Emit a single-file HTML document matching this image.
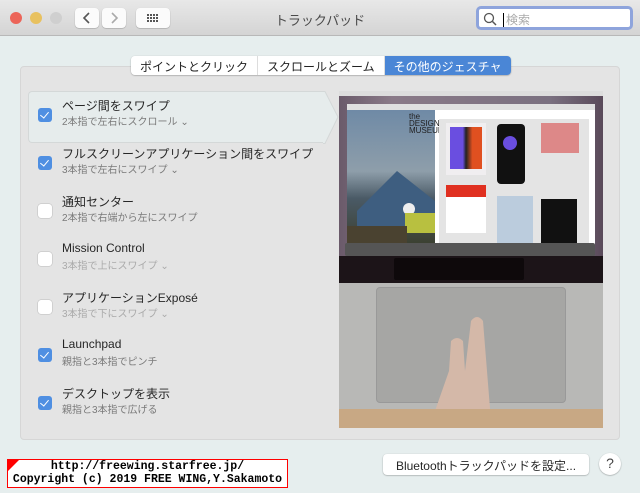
<!DOCTYPE html>
<html><head><meta charset="utf-8"><style>
*{margin:0;padding:0;box-sizing:border-box}
body{width:640px;height:493px;background:#e6eeee;font-family:"Liberation Sans","Noto Sans CJK JP",sans-serif;position:relative;overflow:hidden;color:#262626}
.tb{position:absolute;left:0;top:0;width:640px;height:36px;background:linear-gradient(#e8e8e8,#d4d4d4);border-bottom:1px solid #b8b8b8}
.dot{position:absolute;top:12px;width:12px;height:12px;border-radius:50%}
.btn{position:absolute;top:8px;height:20px;background:#fbfbfb;border-radius:4px;box-shadow:0 0.5px 1px rgba(0,0,0,.3)}
.title{position:absolute;left:0;width:640px;top:10px;text-align:center;font-size:13px;color:#4a4a4a}
.search{position:absolute;left:476px;top:6px;width:157px;height:24px;border:3px solid #8ea4dc;border-radius:5px;background:#fff;font-size:12px;color:#aaa;padding:2px 0 0 24px}
.panel{position:absolute;left:20px;top:66px;width:600px;height:374px;background:#e4e4e4;border:1px solid #d6d6d6;border-radius:4px}
.tabs{position:absolute;left:131px;top:56px;height:19px;display:flex;font-size:12px;border-radius:4px;box-shadow:0 0.5px 1.5px rgba(0,0,0,.35);overflow:hidden}
.tabs div{background:#fff;padding:2px 9px 0;border-right:1px solid #ddd;height:19px;color:#222}
.tabs .on{background:#4a86d6;color:#fff;border:none}
.sel{position:absolute;left:28px;top:91px;width:296px;height:52px;background:#e6ecec;border:1px solid #d4d8d8;border-right:none;border-radius:4px 0 0 4px}
.row{position:absolute;left:38px}
.cb{position:absolute;left:0;top:0;width:14px;height:14px;border-radius:3px;background:#fff;box-shadow:0 0 0 .5px #bbb}
.cb.on{background:#4f8fe2;box-shadow:none}
.cb.on:after{content:"";position:absolute;left:4px;top:2px;width:4px;height:7px;border:solid #fff;border-width:0 1.6px 1.6px 0;transform:rotate(40deg)}
.t{position:absolute;left:24px;top:-11px;font-size:12px;white-space:nowrap;color:#262626}
.s{position:absolute;left:24px;top:5px;font-size:10px;white-space:nowrap;color:#7a7a7a}
.s.g{color:#aaa}
.img{position:absolute;left:339px;top:91px;width:264px;height:337px;background:#b9b9b7;overflow:hidden}
.bt{position:absolute;left:383px;top:454px;width:206px;height:21px;background:#fff;border-radius:4px;box-shadow:0 .5px 1.5px rgba(0,0,0,.35);font-size:12px;text-align:center;padding-top:3px}
.q{position:absolute;left:599px;top:453px;width:22px;height:22px;border-radius:50%;background:#fff;box-shadow:0 .5px 1.5px rgba(0,0,0,.35);font-size:14px;text-align:center;padding-top:2px;color:#444}
.cp{position:absolute;left:7px;top:459px;width:281px;height:29px;border:1px solid red;background:#fff;font-family:"Liberation Mono",monospace;font-size:11.5px;line-height:13px;text-align:center;color:#000;font-weight:bold}
</style></head><body>
<div class="tb">
<div class="dot" style="left:10px;background:#ec6559"></div>
<div class="dot" style="left:30px;background:#e8c15f"></div>
<div class="dot" style="left:50px;background:#cfcfcf"></div>
<div class="btn" style="left:75px;width:24px"><svg width="24" height="20"><path d="M14 5 L9 10 L14 15" stroke="#555" stroke-width="1.6" fill="none"/></svg></div>
<div class="btn" style="left:102px;width:24px"><svg width="24" height="20"><path d="M10 5 L15 10 L10 15" stroke="#aaa" stroke-width="1.6" fill="none"/></svg></div>
<div class="btn" style="left:136px;width:34px"><svg width="34" height="20"><g fill="#555"><rect x="11" y="6" width="2" height="2"/><rect x="14" y="6" width="2" height="2"/><rect x="17" y="6" width="2" height="2"/><rect x="20" y="6" width="2" height="2"/><rect x="11" y="9" width="2" height="2"/><rect x="14" y="9" width="2" height="2"/><rect x="17" y="9" width="2" height="2"/><rect x="20" y="9" width="2" height="2"/><rect x="11" y="12" width="2" height="2"/><rect x="14" y="12" width="2" height="2"/><rect x="17" y="12" width="2" height="2"/><rect x="20" y="12" width="2" height="2"/></g></svg></div>
<div class="title">トラックパッド</div>
<div class="search"><svg style="position:absolute;left:4px;top:3px" width="14" height="14"><circle cx="6" cy="6" r="4.5" stroke="#555" stroke-width="1.3" fill="none"/><path d="M9.5 9.5L13 13" stroke="#555" stroke-width="1.5"/></svg><span style="border-left:1px solid #000;padding-left:2px">検索</span></div>
</div>
<div class="panel"></div>
<div class="tabs"><div>ポイントとクリック</div><div>スクロールとズーム</div><div class="on">その他のジェスチャ</div></div>
<div class="sel"></div>
<svg style="position:absolute;left:323px;top:91px" width="16" height="53"><path d="M0 0.5 L2 0.5 L15 26 L2 52.5 L0 52.5 Z" fill="#e6ecec" stroke="#d4d8d8"/><rect x="0" y="1" width="1.5" height="51" fill="#e6ecec"/></svg>
<div class="row" style="top:108px"><div class="cb on"></div><div class="t">ページ間をスワイプ</div><div class="s">2本指で左右にスクロール ⌄</div></div>
<div class="row" style="top:156px"><div class="cb on"></div><div class="t">フルスクリーンアプリケーション間をスワイプ</div><div class="s">3本指で左右にスワイプ ⌄</div></div>
<div class="row" style="top:204px"><div class="cb"></div><div class="t">通知センター</div><div class="s">2本指で右端から左にスワイプ</div></div>
<div class="row" style="top:252px"><div class="cb"></div><div class="t">Mission Control</div><div class="s g">3本指で上にスワイプ ⌄</div></div>
<div class="row" style="top:300px"><div class="cb"></div><div class="t">アプリケーションExposé</div><div class="s g">3本指で下にスワイプ ⌄</div></div>
<div class="row" style="top:348px"><div class="cb on"></div><div class="t">Launchpad</div><div class="s">親指と3本指でピンチ</div></div>
<div class="row" style="top:396px"><div class="cb on"></div><div class="t">デスクトップを表示</div><div class="s">親指と3本指で広げる</div></div>
<div class="img">
<div style="position:absolute;left:0;top:0;width:264px;height:165px;background:linear-gradient(90deg,#6a5a6a,#8a7a88 20%,#7a7080 80%,#5a4a5a)"></div>
<div style="position:absolute;left:0;top:0;width:264px;height:5px;background:#ddd"></div>
<div style="position:absolute;left:8px;top:13px;width:248px;height:142px;background:#fff"></div>
<div style="position:absolute;left:8px;top:13px;width:248px;height:6px;background:#e0e0e0"></div>
<div style="position:absolute;left:8px;top:19px;width:88px;height:136px;background:linear-gradient(#6f8aa6,#8e9eaa 45%,#4a5a66 65%,#3b3f2e)"></div>
<svg style="position:absolute;left:8px;top:60px" width="88" height="95"><path d="M10 60 L50 20 L88 50 L88 80 L10 80Z" fill="#3e5e80"/><circle cx="62" cy="58" r="6" fill="#eee"/><rect x="58" y="62" width="30" height="20" fill="#b8c040"/><rect x="0" y="75" width="60" height="20" fill="#4a4230"/></svg>
<div style="position:absolute;left:70px;top:22px;font-size:8px;line-height:7px;color:#222">the<br>DESIGN<br>MUSEUM</div>
<div style="position:absolute;left:100px;top:28px;width:150px;height:127px;background:#e4e4e4"></div>
<div style="position:absolute;left:107px;top:32px;width:40px;height:52px;background:#f0eef0"><div style="margin:4px;width:32px;height:42px;background:linear-gradient(90deg,#6a4ee0 40%,#222 50%,#e05020 70%)"></div></div>
<div style="position:absolute;left:158px;top:33px;width:28px;height:60px;background:#111;border-radius:4px"><div style="margin:12px 6px;width:14px;height:14px;border-radius:50%;background:#6a4ee0"></div></div>
<div style="position:absolute;left:202px;top:32px;width:38px;height:30px;background:#d88"></div>
<div style="position:absolute;left:107px;top:94px;width:40px;height:48px;background:#fff;border-top:12px solid #e03020"></div>
<div style="position:absolute;left:158px;top:105px;width:36px;height:50px;background:#bcd"></div>
<div style="position:absolute;left:202px;top:108px;width:36px;height:46px;background:#111"></div>
<div style="position:absolute;left:6px;top:152px;width:250px;height:13px;background:#555;border-radius:2px"></div>
<div style="position:absolute;left:0;top:165px;width:264px;height:27px;background:#1c1418"></div>
<div style="position:absolute;left:55px;top:167px;width:130px;height:22px;background:#0e090b;border-radius:2px"></div>
<div style="position:absolute;left:0;top:192px;width:264px;height:126px;background:#b8b8b6"></div>
<div style="position:absolute;left:37px;top:196px;width:190px;height:116px;background:#a6a6a4;border-radius:4px;border:1px solid #999"></div>
<svg style="position:absolute;left:80px;top:220px" width="100" height="117"><path d="M32 30 Q38 24 44 30 L46 60 L52 10 Q58 2 64 10 L72 110 L10 117 L30 60Z" fill="#d4b8a8"/></svg>
<div style="position:absolute;left:0;top:318px;width:264px;height:19px;background:#c8a884"></div>
</div>
<div class="bt">Bluetoothトラックパッドを設定...</div>
<div class="q">?</div>
<div class="cp"><svg style="position:absolute;left:0;top:0" width="12" height="12"><path d="M0 0H11L0 11Z" fill="red"/></svg>http://freewing.starfree.jp/<br>Copyright (c) 2019 FREE WING,Y.Sakamoto</div>
</body></html>
